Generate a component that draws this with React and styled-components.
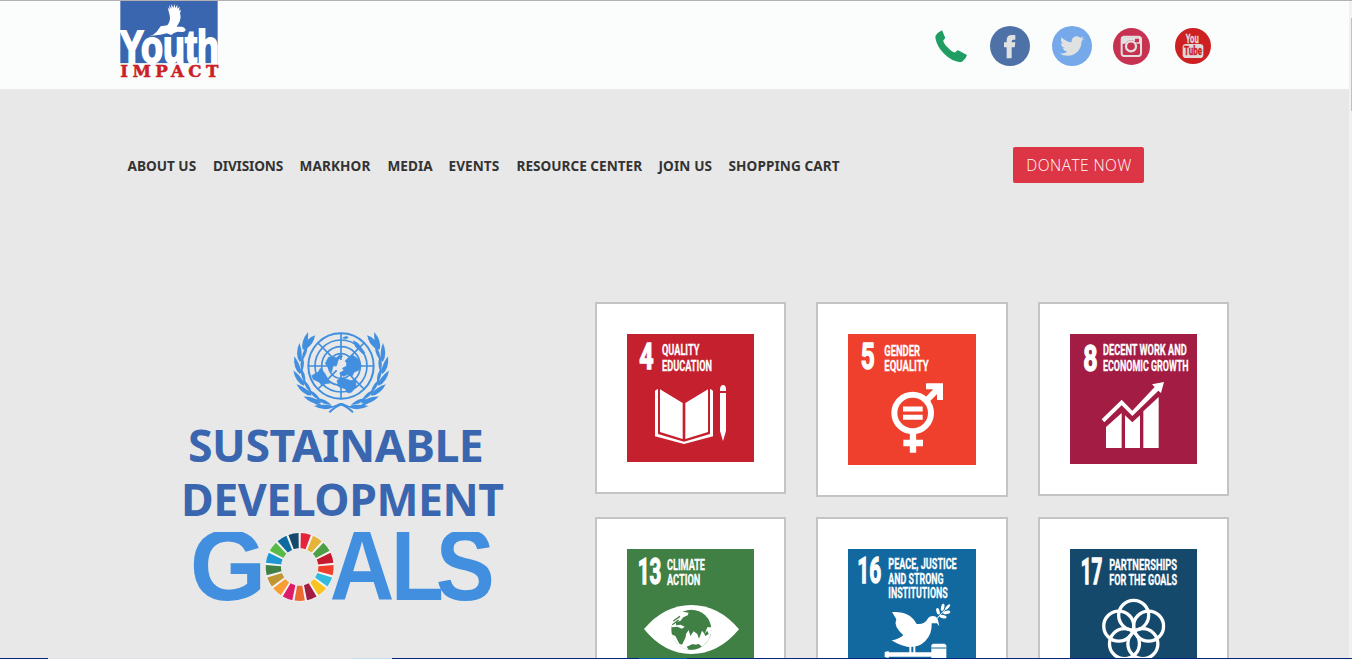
import React from "react";
import styled, { createGlobalStyle } from "styled-components";
import { FaTwitter } from "react-icons/fa";

const GlobalStyle = createGlobalStyle`
  *, *::before, *::after { box-sizing: border-box; }
  html, body { margin: 0; padding: 0; overflow: hidden; background: #e8e8e8; }
  body { font-family: "Noto Sans", "Open Sans", sans-serif; }
  svg { display: block; flex: none; }
`;

const Window = styled.div`
  height: 659px;
  width: 1352px;
  display: flex;
  flex-direction: column;
  overflow: hidden;
  border-top: 1px solid #b4b0b2;
`;

const Viewport = styled.div`
  display: flex;
  height: 657px;
  overflow: hidden;
`;

const Page = styled.div`
  width: 1349px;
  height: 100%;
  overflow: hidden;
  background: #e8e8e8;
`;

const ScrollTrack = styled.div`
  width: 3px;
  background: #f1f1f1;
  padding: 17px 0 0 2px;
`;

const ScrollThumb = styled.div`
  width: 1px;
  height: 93px;
  background: #c1c1c1;
`;

const Taskbar = styled.div`
  display: flex;
  height: 1px;
  background: #00247a;
`;

const TaskbarPart = styled.div`
  width: ${(p) => p.$w}px;
  background: ${(p) => p.$color};
`;

const Header = styled.header`
  height: 88px;
  display: flex;
  justify-content: space-between;
  align-items: flex-start;
  padding: 0 138px 0 119px;
  background: #fbfdfc;
`;

const Social = styled.div`
  display: flex;
  align-items: center;
  height: 90px;
`;

const SocialLink = styled.a`
  display: flex;
  margin-left: ${(p) => p.$gap}px;
`;

const Disc = styled.span`
  display: flex;
  align-items: center;
  justify-content: center;
  width: ${(p) => p.$size}px;
  height: ${(p) => p.$size}px;
  border-radius: 50%;
  background: ${(p) => p.$color};
  color: #e0e2e2;
`;

const NavRow = styled.div`
  display: flex;
  align-items: center;
  justify-content: space-between;
  height: 36px;
  margin-top: 58px;
  padding: 0 205px 0 127.5px;
`;

const Nav = styled.nav`
  display: flex;
  gap: 16px;
`;

const NavLink = styled.a`
  width: ${(p) => p.$w}px;
  font: 700 13.6px/20px "Noto Sans", sans-serif;
  letter-spacing: ${(p) => p.$ls || 0}px;
  white-space: nowrap;
  color: #333;
  padding-top: 2px;
`;

const Donate = styled.button`
  width: 131px;
  height: 36px;
  border: 0;
  border-radius: 2px;
  padding: 0 0 0 1px;
  background: #dc3545;
  color: #fff;
  font: 300 15.5px/36px "Open Sans", "Noto Sans", sans-serif;
  letter-spacing: 0.45px;
`;

const Main = styled.main`
  display: flex;
  align-items: flex-start;
  padding: 119px 0 0 181px;
`;

const Goals = styled.section`
  width: 414px;
  padding-top: 29px;
`;

const Emblem = styled.div`
  padding-left: 110px;
`;

const Title = styled.h1`
  margin: 3px 0 0;
  font: 700 44.6px/54px "Noto Sans", sans-serif;
  color: #3a66b0;
  white-space: nowrap;
`;

const TitleLine = styled.span`
  display: block;
  padding-left: ${(p) => p.$indent}px;
  letter-spacing: ${(p) => p.$ls}px;
`;

const WordMark = styled.div`
  padding: 6px 0 0 12px;
`;

const CardGrid = styled.section`
  display: grid;
  grid-template-columns: 191px 192px 191px;
  gap: 20px 30px;
  align-items: start;
`;

const Card = styled.article`
  border: 2px solid #c4c4c4;
  background: #fff;
  padding: 30px;
`;

const condensed = '"Liberation Sans Narrow", Roboto, sans-serif';

function Words({ x, y, w, size, children, fill = "#fff", weight = 0.8 }) {
  return (
    <text x={x} y={y} fill={fill} stroke={fill} strokeWidth={weight} fontFamily={condensed} fontWeight="700"
      fontSize={size} textLength={w} lengthAdjust="spacingAndGlyphs">{children}</text>
  );
}

function Logo() {
  return (
    <svg width="100" height="80" viewBox="57 3 300 240">
      <rect x="61" y="3" width="292" height="187" fill="#3a66b0" />
      <path fill="#fff" d="M148 109 Q160 106 170 95 L182 79 L202 76 Q213 62 209 46 L203 22 L209 29 L207 15 L214 26 L214 12 L220 24 L223 12 L226 24 L232 14 L232 26 L239 20 L237 32 L243 29 L240 40 Q245 56 236 70 L230 80 L245 80 Q257 83 257 91 Q254 97 246 96 L233 95 Q220 98 214 105 L200 100 Q180 106 166 106 Z" />
      <text x="59" y="188" fill="#fff" stroke="#fff" strokeWidth="6" fontFamily='"Liberation Sans", sans-serif'
        fontWeight="700" fontSize="138" textLength="298" lengthAdjust="spacingAndGlyphs">Youth</text>
      <rect x="61" y="190" width="292" height="45" fill="#fbfdfc" />
      <text x="61" y="230" fill="#cc2027" stroke="#cc2027" strokeWidth="1.5" fontFamily='"DejaVu Serif", serif'
        fontWeight="700" fontSize="50" textLength="294" lengthAdjust="spacing">IMPACT</text>
    </svg>
  );
}

function Phone() {
  return (
    <svg width="32" height="33" viewBox="45 57 96 99">
      <path fill="#1f9d63" d="M66 58 L75 79 Q77 83 70 88 Q69 94 78 104 Q92 119 102 124 Q107 126 110 119 Q113 117 117 119 L141 132 Q138 143 128 151 Q122 156 108 151 Q82 143 60 114 Q46 93 46 76 Q50 66 66 58 Z" />
    </svg>
  );
}

function Facebook() {
  return (
    <svg width="40" height="40" viewBox="210 48 120 120">
      <path fill="#e0e2e2" d="M260 145 V112 H252 V97 H260 V91 Q260 75 276 75 H286 V89 H280 Q275 89 275 94 V97 H286 L284 112 H275 V145 Z" />
    </svg>
  );
}

function Instagram() {
  return (
    <svg width="37" height="37" viewBox="579 54 111 111">
      <circle cx="634.5" cy="109.5" r="55.5" fill="#c6324f" />
      <rect x="605" y="80" width="58" height="58" rx="8" fill="none" stroke="#e4e0e1" strokeWidth="6" />
      <path fill="#e4e0e1" d="M604 82 H664 V101 H651 A20 20 0 0 0 616 101 H604 Z" />
      <rect x="645" y="86" width="12" height="11" rx="1" fill="#c6324f" />
      <circle cx="633" cy="109" r="15" fill="#c6324f" stroke="#e4e0e1" strokeWidth="7" />
    </svg>
  );
}

function YouTube() {
  return (
    <svg width="36" height="36" viewBox="764 54 108 108">
      <circle cx="818" cy="108" r="54" fill="#cc2022" />
      <Words x="796" y="99" w="39" size="38" fill="#e6dedd">You</Words>
      <rect x="787" y="102" width="62" height="42" rx="10" fill="#dedbda" />
      <Words x="791" y="136" w="54" size="37" fill="#cc2022">Tube</Words>
    </svg>
  );
}

const leafSteps = [0, 1, 2, 3, 4, 5, 6];

function Wreath() {
  return (
    <g fill="#418fde">
      <path d="M425 243 Q470 278 510 254 Q530 260 549 279" fill="none" stroke="#418fde" strokeWidth="6" />
      {leafSteps.map((i) => {
        const turn = 110 + i * 17;
        const a = (turn * Math.PI) / 180;
        const x = 513 + 122 * Math.cos(a);
        const y = 142 + 122 * Math.sin(a);
        return (
          <g key={i} transform={`translate(${x} ${y}) rotate(${turn + 90})`}>
            <path d="M-18 -2 Q0 -22 36 -17 Q18 -3 -12 3 Z" />
            <path d="M-12 5 Q6 -4 36 6 Q20 17 -12 5 Z" />
          </g>
        );
      })}
      <path d="M402 86 Q408 56 436 48 Q426 74 402 86 Z" />
    </g>
  );
}

function UnEmblem() {
  return (
    <svg width="100" height="84" viewBox="363 35 300 252">
      <g fill="none" stroke="#418fde" strokeWidth="5">
        <circle cx="513" cy="140" r="98" strokeWidth="6" />
        <circle cx="513" cy="140" r="78" />
        <circle cx="513" cy="140" r="58" />
        <circle cx="513" cy="140" r="37" />
        <path d="M513 42 V122 M513 158 V238 M415 140 H490 M536 140 H611 M444 71 L500 127 M526 153 L582 209 M582 71 L526 127 M500 153 L444 209" />
      </g>
      <g fill="#418fde" stroke="#418fde" strokeWidth="2">
        <path d="M466 132 L476 113 L500 115 L509 106 L518 111 L505 121 L499 140 L489 139 L485 158 L475 146 Z" />
        <path d="M425 169 L445 158 L451 147 L463 160 L481 191 L466 193 L457 200 L448 189 L430 180 Z" />
        <path d="M529 123 L548 107 L563 118 L574 139 L566 153 L553 158 L546 171 L535 165 L520 171 L509 162 L522 153 L517 147 L530 140 Z" />
        <path d="M501 183 L520 176 L543 184 L557 179 L558 203 L544 219 L534 221 L525 208 L506 202 Z" />
        <path d="M550 64 L564 72 L585 101 L579 104 L557 83 Z" />
        <path d="M518 55 L530 51 L535 55 L524 59 Z" />
      </g>
      <Wreath />
      <g transform="translate(1027 0) scale(-1 1)"><Wreath /></g>
    </svg>
  );
}

const wheelColors = ["#e5243b", "#e5b53b", "#4c9f45", "#c5192d", "#ef402b", "#33bbdd", "#f9c41f", "#a21c44", "#ed6b30",
  "#dd1b6b", "#f89d34", "#bf9632", "#407f46", "#1f97d4", "#5aba47", "#0f6a9f", "#154a6b"];

function wedge(index) {
  const step = (2 * Math.PI) / 17;
  const gap = 0.033;
  const a = index * step - Math.PI / 2 + gap;
  const b = (index + 1) * step - Math.PI / 2 - gap;
  const p = (r, t) => `${390 + r * Math.cos(t)} ${741 + r * Math.sin(t)}`;
  return `M${p(102, a)} A102 102 0 0 1 ${p(102, b)} L${p(56, b - 0.015)} A56 56 0 0 0 ${p(56, a + 0.015)} Z`;
}

const goalLetters = [
  { char: "G", x: 60, sx: 0.99 },
  { char: "A", x: 480, sx: 0.9 },
  { char: "L", x: 664, sx: 0.87 },
  { char: "S", x: 798, sx: 0.89 },
];

function GoalsMark() {
  return (
    <svg width="300" height="70" viewBox="70 636 900 210">
      <circle cx="390" cy="741" r="104" fill="#f3f3f3" />
      <circle cx="390" cy="741" r="55" fill="#e8e8e8" />
      {wheelColors.map((color, i) => <path key={color} d={wedge(i)} fill={color} />)}
      {goalLetters.map((l) => (
        <text key={l.char} transform={`translate(${l.x} 840) scale(${l.sx} 1)`} fill="#418fde"
          fontFamily='"Liberation Sans", sans-serif' fontWeight="700" fontSize="298">{l.char}</text>
      ))}
    </svg>
  );
}

function Tile({ x, w, h, color, children }) {
  return (
    <svg width={w} height={h} viewBox={`${x} 117 ${w * 3} ${h * 3}`}>
      <rect x={x} y="117" width={w * 3} height={h * 3} fill={color} />
      {children}
    </svg>
  );
}

function Education() {
  return (
    <Tile x={111} w={127} h={128} color="#c5202e">
      <Words x="148" y="222" w="43" size="108" weight={4}>4</Words>
      <Words x="216" y="181" w="112" size="44">QUALITY</Words>
      <Words x="216" y="227" w="150" size="44">EDUCATION</Words>
      <g fill="#fff">
        <path d="M210 283 L278 324 V432 L210 411 Z" />
        <path d="M354 283 L286 324 V432 L354 411 Z" />
        <path d="M195 288 Q198 283 204 282 V417 L282 440 L360 417 V282 Q366 283 369 288 V424 L282 447 L195 424 Z" />
        <path d="M390 288 V281 Q392 270 399 270 Q407 270 408 281 V288 Z" />
        <path d="M390 294 H408 V408 L399 438 L390 408 Z" />
      </g>
    </Tile>
  );
}

function Gender() {
  return (
    <Tile x={114} w={128} h={131} color="#ef402d">
      <Words x="152" y="223" w="42" size="108" weight={4}>5</Words>
      <Words x="223" y="182" w="107" size="44">GENDER</Words>
      <Words x="223" y="229" w="133" size="44">EQUALITY</Words>
      <circle cx="308" cy="354" r="55" fill="none" stroke="#fff" strokeWidth="18" />
      <path d="M309 410 V473 M280 444 H339" stroke="#fff" strokeWidth="19" />
      <path d="M350 316 L388 277" stroke="#fff" strokeWidth="18" />
      <path d="M348 265 H399 V315 H381 V296 L367 283 H348 Z" fill="#fff" />
      <path d="M279 342 H338 M279 367 H338" stroke="#fff" strokeWidth="15" />
    </Tile>
  );
}

function Growth() {
  return (
    <Tile x={120} w={127} h={130} color="#a31c44">
      <Words x="160" y="229" w="43" size="108" weight={4}>8</Words>
      <Words x="219" y="181" w="251" size="44">DECENT WORK AND</Words>
      <Words x="219" y="228" w="257" size="44">ECONOMIC GROWTH</Words>
      <g fill="#fff">
        <path d="M228 396 L275 354 V459 H228 Z" />
        <path d="M285 361 L307 382 L330 361 V459 H285 Z" />
        <path d="M340 349 L386 306 V459 H340 Z" />
        <path d="M402 261 L393 294 L385 287 L307 363 L275 331 L223 382 L215 373 L275 314 L307 347 L374 276 L366 268 Z" />
      </g>
    </Tile>
  );
}

function Climate() {
  return (
    <Tile x={111} w={127} h={128} color="#418045">
      <Words x="143" y="222" w="71" size="108" weight={4}>13</Words>
      <Words x="231" y="180" w="114" size="44">CLIMATE</Words>
      <Words x="231" y="226" w="100" size="44">ACTION</Words>
      <path d="M162 357 Q223 285 304 285 Q386 285 447 358 Q386 432 304 432 Q223 432 162 357 Z" fill="#fff" />
      <circle cx="304" cy="359" r="60" fill="#418045" />
      <g fill="#fff">
        <path d="M240 340 L252 318 L265 308 L279 305 L296 308 L293 316 L280 322 L271 333 L258 336 L258 346 L272 344 L284 350 L276 356 L262 350 L246 352 Z" />
        <path d="M243 372 L256 378 L268 401 L276 404 L287 382 L288 372 L296 360 L301 378 L311 364 L322 372 L327 386 L336 362 L344 372 L352 352 L366 352 Q364 392 336 410 L326 402 L310 406 L314 414 L296 420 Q258 412 243 372 Z" />
      </g>
      <path d="M250 333 L270 319 M247 344 L266 330" fill="none" stroke="#418045" strokeWidth="4" />
      <path d="M290 410 L308 402 L330 408 Q314 420 296 419 Z M343 372 L352 362 L356 372 L346 378 Z" fill="#418045" />
      <path d="M316 390 L330 384 L340 391 L332 398 Z" fill="#fff" />
    </Tile>
  );
}

function Peace() {
  return (
    <Tile x={116} w={128} h={130} color="#12699f">
      <Words x="144" y="220" w="72" size="108" weight={4}>16</Words>
      <Words x="237" y="177" w="205" size="44">PEACE, JUSTICE</Words>
      <Words x="237" y="221" w="166" size="44">AND STRONG</Words>
      <Words x="237" y="265" w="178" size="44">INSTITUTIONS</Words>
      <g fill="#fff">
        <path d="M248 306 Q302 302 322 342 Q347 344 354 328 Q363 314 380 320 L386 330 L390 349 L383 340 L367 340 Q369 372 348 393 Q328 414 293 410 Q265 404 247 391 Q265 390 282 376 Q251 348 261 328 Z" />
        <path d="M300 404 H306 V430 H300 Z M312 404 H318 V430 H312 Z" />
        <path d="M226 426 L238 423 V427 H366 V405 L371 401 H406 L411 406 V459 H366 V440 H238 V444 L226 441 Z" />
        <g>
          <ellipse cx="386" cy="304" rx="5" ry="10" transform="rotate(-15 386 304)" />
          <ellipse cx="400" cy="292" rx="5" ry="11" transform="rotate(12 400 292)" />
          <ellipse cx="415" cy="291" rx="4" ry="10" transform="rotate(42 415 291)" />
          <ellipse cx="412" cy="307" rx="5" ry="11" transform="rotate(80 412 307)" />
          <ellipse cx="401" cy="320" rx="5" ry="11" transform="rotate(103 401 320)" />
        </g>
      </g>
      <path d="M379 331 L390 317 L419 287" fill="none" stroke="#fff" strokeWidth="3" />
      <path d="M366 414 H411" stroke="#12699f" strokeWidth="3" />
    </Tile>
  );
}

const petals = [0, 1, 2, 3, 4];

function Partnerships() {
  return (
    <Tile x={120} w={127} h={130} color="#15496b">
      <Words x="152" y="222" w="65" size="108" weight={4}>17</Words>
      <Words x="238" y="180" w="203" size="44">PARTNERSHIPS</Words>
      <Words x="238" y="226" w="203" size="44">FOR THE GOALS</Words>
      <g fill="none" stroke="#fff" strokeWidth="10">
        {petals.map((i) => {
          const a = ((i * 72 - 90) * Math.PI) / 180;
          return <circle key={i} cx={311 + 47 * Math.cos(a)} cy={363 + 47 * Math.sin(a)} r="45" />;
        })}
      </g>
    </Tile>
  );
}

const links = [
  { label: "ABOUT US", w: 69.5 },
  { label: "DIVISIONS", w: 70.5, ls: -0.15 },
  { label: "MARKHOR", w: 72, ls: 0.1 },
  { label: "MEDIA", w: 45 },
  { label: "EVENTS", w: 52, ls: 0.05 },
  { label: "RESOURCE CENTER", w: 126 },
  { label: "JOIN US", w: 54, ls: 0.1 },
  { label: "SHOPPING CART", w: 112, ls: 0.08 },
];

const tiles = [Education, Gender, Growth, Climate, Peace, Partnerships];

export default function App() {
  return (
    <Window>
      <GlobalStyle />
      <Viewport>
        <Page>
          <Header>
            <Logo />
            <Social>
              <SocialLink $gap={0}><Phone /></SocialLink>
              <SocialLink $gap={23}><Disc $size={40} $color="#4e71a8"><Facebook /></Disc></SocialLink>
              <SocialLink $gap={22}><Disc $size={40} $color="#76a9ea"><FaTwitter size={24} /></Disc></SocialLink>
              <SocialLink $gap={21}><Instagram /></SocialLink>
              <SocialLink $gap={25}><YouTube /></SocialLink>
            </Social>
          </Header>
          <NavRow>
            <Nav>
              {links.map((l) => <NavLink key={l.label} $w={l.w} $ls={l.ls}>{l.label}</NavLink>)}
            </Nav>
            <Donate>DONATE NOW</Donate>
          </NavRow>
          <Main>
            <Goals>
              <Emblem><UnEmblem /></Emblem>
              <Title>
                <TitleLine $indent={7} $ls={-0.45}>SUSTAINABLE</TitleLine>
                <TitleLine $indent={-1} $ls={-0.45}>DEVELOPMENT</TitleLine>
              </Title>
              <WordMark><GoalsMark /></WordMark>
            </Goals>
            <CardGrid>
              {tiles.map((Goal) => <Card key={Goal.name}><Goal /></Card>)}
            </CardGrid>
          </Main>
        </Page>
        <ScrollTrack><ScrollThumb /></ScrollTrack>
      </Viewport>
      <Taskbar>
        <TaskbarPart $w={48} $color="#00247a" />
        <TaskbarPart $w={304} $color="#dfe3ea" />
        <TaskbarPart $w={40} $color="#c3dcf2" />
        <TaskbarPart $w={247} $color="#00247a" />
        <TaskbarPart $w={48} $color="#0058a8" />
      </Taskbar>
    </Window>
  );
}
